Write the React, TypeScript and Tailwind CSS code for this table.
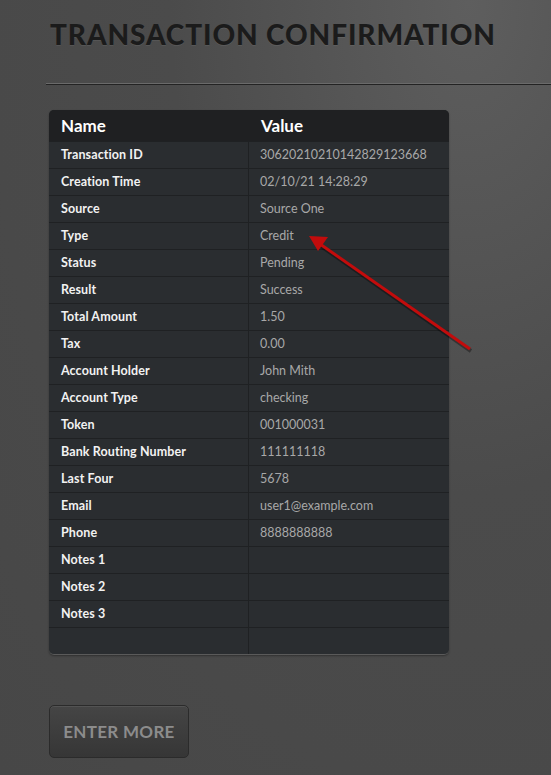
import React from 'react';

const rows: [string, string][] = [
  ['Transaction ID', '30620210210142829123668'],
  ['Creation Time', '02/10/21 14:28:29'],
  ['Source', 'Source One'],
  ['Type', 'Credit'],
  ['Status', 'Pending'],
  ['Result', 'Success'],
  ['Total Amount', '1.50'],
  ['Tax', '0.00'],
  ['Account Holder', 'John Mith'],
  ['Account Type', 'checking'],
  ['Token', '001000031'],
  ['Bank Routing Number', '111111118'],
  ['Last Four', '5678'],
  ['Email', 'user1@example.com'],
  ['Phone', '8888888888'],
  ['Notes 1', ''],
  ['Notes 2', ''],
  ['Notes 3', ''],
  ['', ''],
];

const App = () => {
  return (
    <div
      className="relative min-h-[775px] w-full overflow-hidden bg-[#494949] font-['Lato',sans-serif]"
      style={{ backgroundImage: 'radial-gradient(ellipse at 85% 0%, #5e5e5e 0%, #4b4b4b 45%, #474747 100%)' }}
    >
      {/* Page Header */}
      <div className="pl-[50px] pt-[18px]">
        <h1 className="text-[28px] font-black leading-[32px] tracking-[0.9px] text-[#1b1b1b] [text-shadow:0_1px_0_rgba(255,255,255,0.08)]">
          TRANSACTION CONFIRMATION
        </h1>
      </div>
      <div className="ml-[46px] mt-[33px] h-[2px] border-t border-[#6a6a6a] bg-[#232323]" />

      {/* Details Table */}
      <div className="ml-[49px] mt-[25px] w-[400px] overflow-hidden rounded-[5px] border-b border-[#5a5a5a] bg-[#2a2d30] shadow-[0_1px_2px_rgba(0,0,0,0.35)]">
        <div className="grid h-[31px] grid-cols-[200px_200px] items-center bg-[#1f2022] text-[17px] font-bold text-white">
          <div className="pl-[12px]">Name</div>
          <div className="pl-[12px]">Value</div>
        </div>
        {rows.map(([name, value], i) => (
          <div key={i} className="grid h-[27px] grid-cols-[200px_200px] border-t border-[#1f2123] text-[12.5px]">
            <div className="flex items-center border-r border-[#1f2123] pl-[12px] font-bold tracking-[0.1px] text-[#f2f2f2]">{name}</div>
            <div className="flex items-center pl-[11px] text-[#a8a8a8]">{value}</div>
          </div>
        ))}
      </div>

      {/* Actions */}
      <div className="ml-[49px] mt-[50px]">
        <button className="h-[53px] w-[140px] rounded-[5px] border border-[#2b2b2b] bg-gradient-to-b from-[#454545] to-[#363636] text-[17px] font-bold tracking-[0.3px] text-[#8c8c8c] shadow-[inset_0_1px_0_rgba(255,255,255,0.08)]">
          ENTER MORE
        </button>
      </div>

      {/* Annotation arrow */}
      <svg className="pointer-events-none absolute left-0 top-0" width="551" height="775" viewBox="0 0 551 775">
        <line x1="470" y1="349" x2="320" y2="244" stroke="rgba(0,0,0,0.35)" strokeWidth="4" transform="translate(1 2)" />
        <line x1="470" y1="349" x2="320" y2="244" stroke="#c20c0c" strokeWidth="3" />
        <polygon points="309,236 328,237 318,251" fill="#c20c0c" />
      </svg>
    </div>
  );
};

export default App;
